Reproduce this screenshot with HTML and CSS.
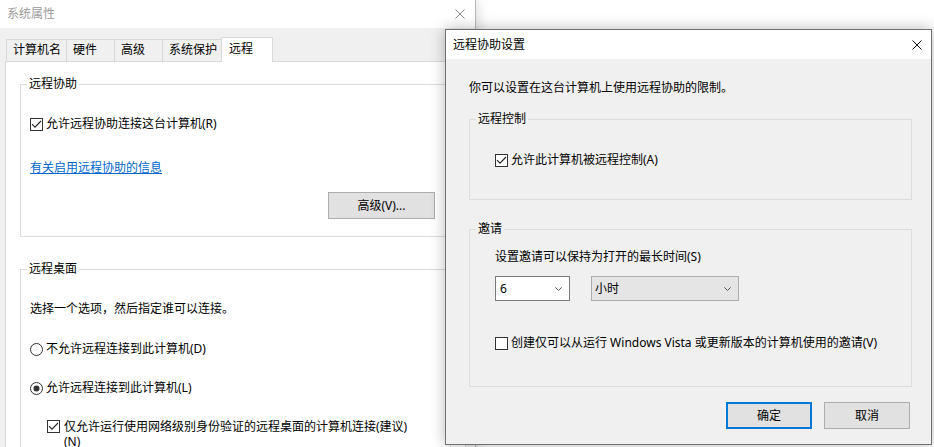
FILE: index.html
```html
<!DOCTYPE html>
<html lang="zh-CN">
<head>
<meta charset="utf-8">
<title>系统属性 - 远程</title>
<link rel="stylesheet" href="styles.css">
</head>
<body>
<div class="win sysprops">
  <div class="titlebar inactive">
    <span>系统属性</span>
    <svg class="xicon" width="10" height="10" viewBox="0 0 10 10"><path d="M0.5 0.5L9.5 9.5M9.5 0.5L0.5 9.5" stroke="#8a8a8a" stroke-width="1" fill="none"/></svg>
  </div>
  <div class="tabs">
    <div class="tab t1">计算机名</div>
    <div class="tab t2">硬件</div>
    <div class="tab t3">高级</div>
    <div class="tab t4">系统保护</div>
    <div class="tab sel">远程</div>
  </div>
  <div class="panel">
    <fieldset class="group g-assist">
      <legend>远程协助</legend>
      <div class="gbody gb-left">
        <div class="row">
          <svg class="box" width="13" height="13" viewBox="0 0 13 13"><rect x="0.5" y="0.5" width="12" height="12" fill="#fff" stroke="#333"/><path d="M2 6.2L5 9.2L11 3" stroke="#222" stroke-width="1.1" fill="none"/></svg>
          <span>允许远程协助连接这台计算机(R)</span>
        </div>
        <a class="link" href="#">有关启用远程协助的信息</a>
        <div class="btnrow">
          <button class="btn adv">高级(V)...</button>
        </div>
      </div>
    </fieldset>
    <fieldset class="group g-desk">
      <legend>远程桌面</legend>
      <div class="gbody gb-left">
        <p class="desc">选择一个选项，然后指定谁可以连接。</p>
        <div class="row r1">
          <svg class="box" width="13" height="13" viewBox="0 0 13 13"><circle cx="6.5" cy="6.5" r="6" fill="#fff" stroke="#333"/></svg>
          <span>不允许远程连接到此计算机(D)</span>
        </div>
        <div class="row r2">
          <svg class="box" width="13" height="13" viewBox="0 0 13 13"><circle cx="6.5" cy="6.5" r="6" fill="#fff" stroke="#333"/><circle cx="6.5" cy="6.5" r="3" fill="#333"/></svg>
          <span>允许远程连接到此计算机(L)</span>
        </div>
        <div class="row sub">
          <svg class="box" width="13" height="13" viewBox="0 0 13 13"><rect x="0.5" y="0.5" width="12" height="12" fill="#fff" stroke="#333"/><path d="M2 6.2L5 9.2L11 3" stroke="#222" stroke-width="1.1" fill="none"/></svg>
          <span>仅允许运行使用网络级别身份验证的远程桌面的计算机连接(建议)<br>(N)</span>
        </div>
      </div>
    </fieldset>
  </div>
</div>

<div class="win dialog">
  <div class="dtitle">
    <span>远程协助设置</span>
    <svg class="xicon" width="10" height="10" viewBox="0 0 10 10"><path d="M0.5 0.5L9.5 9.5M9.5 0.5L0.5 9.5" stroke="#111" stroke-width="1" fill="none"/></svg>
  </div>
  <div class="dbody">
    <p class="intro">你可以设置在这台计算机上使用远程协助的限制。</p>
    <fieldset class="group dg1">
      <legend>远程控制</legend>
      <div class="gbody gb-dlg">
        <div class="row">
          <svg class="box" width="13" height="13" viewBox="0 0 13 13"><rect x="0.5" y="0.5" width="12" height="12" fill="#fff" stroke="#333"/><path d="M2 6.2L5 9.2L11 3" stroke="#222" stroke-width="1.1" fill="none"/></svg>
          <span>允许此计算机被远程控制(A)</span>
        </div>
      </div>
    </fieldset>
    <fieldset class="group dg2">
      <legend>邀请</legend>
      <div class="gbody gb-dlg">
        <p class="desc">设置邀请可以保持为打开的最长时间(S)</p>
        <div class="selects">
          <div class="select s1"><span>6</span><svg width="7" height="4" viewBox="0 0 7 4"><path d="M0.3 0.3L3.5 3.5L6.7 0.3" stroke="#555" stroke-width="1" fill="none"/></svg></div>
          <div class="select s2"><span>小时</span><svg width="7" height="4" viewBox="0 0 7 4"><path d="M0.3 0.3L3.5 3.5L6.7 0.3" stroke="#555" stroke-width="1" fill="none"/></svg></div>
        </div>
        <div class="row vista">
          <svg class="box" width="13" height="13" viewBox="0 0 13 13"><rect x="0.5" y="0.5" width="12" height="12" fill="#fff" stroke="#333"/></svg>
          <span>创建仅可以从运行 Windows Vista 或更新版本的计算机使用的邀请(V)</span>
        </div>
      </div>
    </fieldset>
    <div class="dbuttons">
      <button class="btn dbtn ok">确定</button>
      <button class="btn dbtn">取消</button>
    </div>
  </div>
</div>
</body>
</html>
```

FILE: styles.css
```css
* { box-sizing: border-box; }
html, body { margin: 0; padding: 0; }
body {
  width: 934px;
  height: 447px;
  overflow: hidden;
  position: relative;
  background: #ffffff;
  font-family: "Noto Sans", "Noto Sans CJK SC", sans-serif;
  font-size: 12px;
  line-height: 16px;
  color: #000;
}
p { margin: 0; }

.win { position: absolute; }

/* ---------- System properties window ---------- */
.sysprops {
  left: 0;
  top: 0;
  width: 476px;
  height: 480px;
  background: #f0f0f0;
  border-right: 1px solid #b8b8b8;
  box-shadow: 3px 0 10px rgba(0, 0, 0, 0.12);
}
.titlebar {
  height: 28px;
  background: #fff;
  display: flex;
  align-items: center;
  justify-content: space-between;
  padding: 0 10px 0 7px;
  color: #9b9b9b;
}
.tabs {
  display: flex;
  align-items: flex-end;
  padding: 9px 0 0 6px;
}
.tab {
  height: 22px;
  border: 1px solid #d9d9d9;
  border-bottom: none;
  border-right: none;
  padding: 0 0 0 6px;
  line-height: 20px;
  white-space: nowrap;
}
.t1 { width: 60px; }
.t2 { width: 48px; }
.t3 { width: 48px; }
.t4 { width: 59px; }
.tab.sel {
  width: 52px;
  height: 25px;
  background: #fff;
  border-right: 1px solid #d9d9d9;
  margin-bottom: -1px;
  padding-left: 7px;
  line-height: 22px;
  position: relative;
  z-index: 1;
}
.panel {
  margin-left: 5px;
  width: 461px;
  height: 420px;
  background: #fff;
  border: 1px solid #d9d9d9;
  padding: 14px 14px 0 14px;
}

/* group boxes */
.group {
  margin: 0;
  min-width: 0;
  border: 1px solid #dcdcdc;
  padding: 0 0 0 6px;
}
.group legend {
  padding: 0 2px;
  line-height: 16px;
}
.g-assist { padding-top: 24px; padding-bottom: 17px; }
.g-desk { margin-top: 24px; padding-top: 24px; padding-bottom: 20px; }
.gb-left { padding-left: 3px; padding-right: 6px; }

.row {
  display: flex;
  align-items: center;
  gap: 3px;
  height: 16px;
  white-space: nowrap;
}
.box { flex: none; display: block; }

.link {
  display: block;
  width: max-content;
  margin-top: 28px;
  color: #0066cc;
  text-decoration: underline;
}
.btnrow {
  display: flex;
  justify-content: flex-end;
  margin-top: 16px;
  padding-right: 9px;
}
.btn {
  font: inherit;
  color: #000;
  margin: 0;
  padding: 0;
  height: 27px;
  background: #e1e1e1;
  border: 1px solid #adadad;
  display: flex;
  align-items: center;
  justify-content: center;
}
.adv { width: 107px; }

.r1 { margin-top: 24px; }
.r2 { margin-top: 23px; }
.sub {
  margin-top: 23px;
  margin-left: 17px;
  height: auto;
  align-items: flex-start;
  line-height: 15px;
  gap: 4px;
}
.sub .box { margin-top: 1px; }

/* ---------- Remote assistance settings dialog ---------- */
.dialog {
  left: 445px;
  top: 29px;
  width: 487px;
  height: 416px;
  background: #f0f0f0;
  border: 1px solid #707070;
  box-shadow: 0 0 14px rgba(0, 0, 0, 0.28);
}
.dtitle {
  height: 29px;
  background: #fff;
  display: flex;
  align-items: center;
  justify-content: space-between;
  padding: 0 9px 0 7px;
}
.dbody { padding: 21px 19px 0 23px; }
.dg1 { margin-top: 15px; padding-top: 25px; padding-bottom: 31px; }
.dg2 { margin-top: 21px; padding-top: 12px; padding-bottom: 35px; }
.gb-dlg { padding-left: 19px; }

.selects {
  display: flex;
  gap: 21px;
  margin-top: 11px;
}
.select {
  height: 25px;
  display: flex;
  align-items: center;
  justify-content: space-between;
  padding: 0 7px 0 4px;
}
.select svg { display: block; }
.s1 { width: 75px; background: #fff; border: 1px solid #7a7a7a; }
.s2 { width: 148px; background: #e5e5e5; border: 1px solid #adadad; padding-left: 3px; }

.vista { margin-top: 34px; }

.dbuttons {
  display: flex;
  justify-content: flex-end;
  gap: 12px;
  margin-top: 15px;
  margin-right: 2px;
}
.dbtn { width: 86px; }
.ok { border: 2px solid #0078d7; }
```
